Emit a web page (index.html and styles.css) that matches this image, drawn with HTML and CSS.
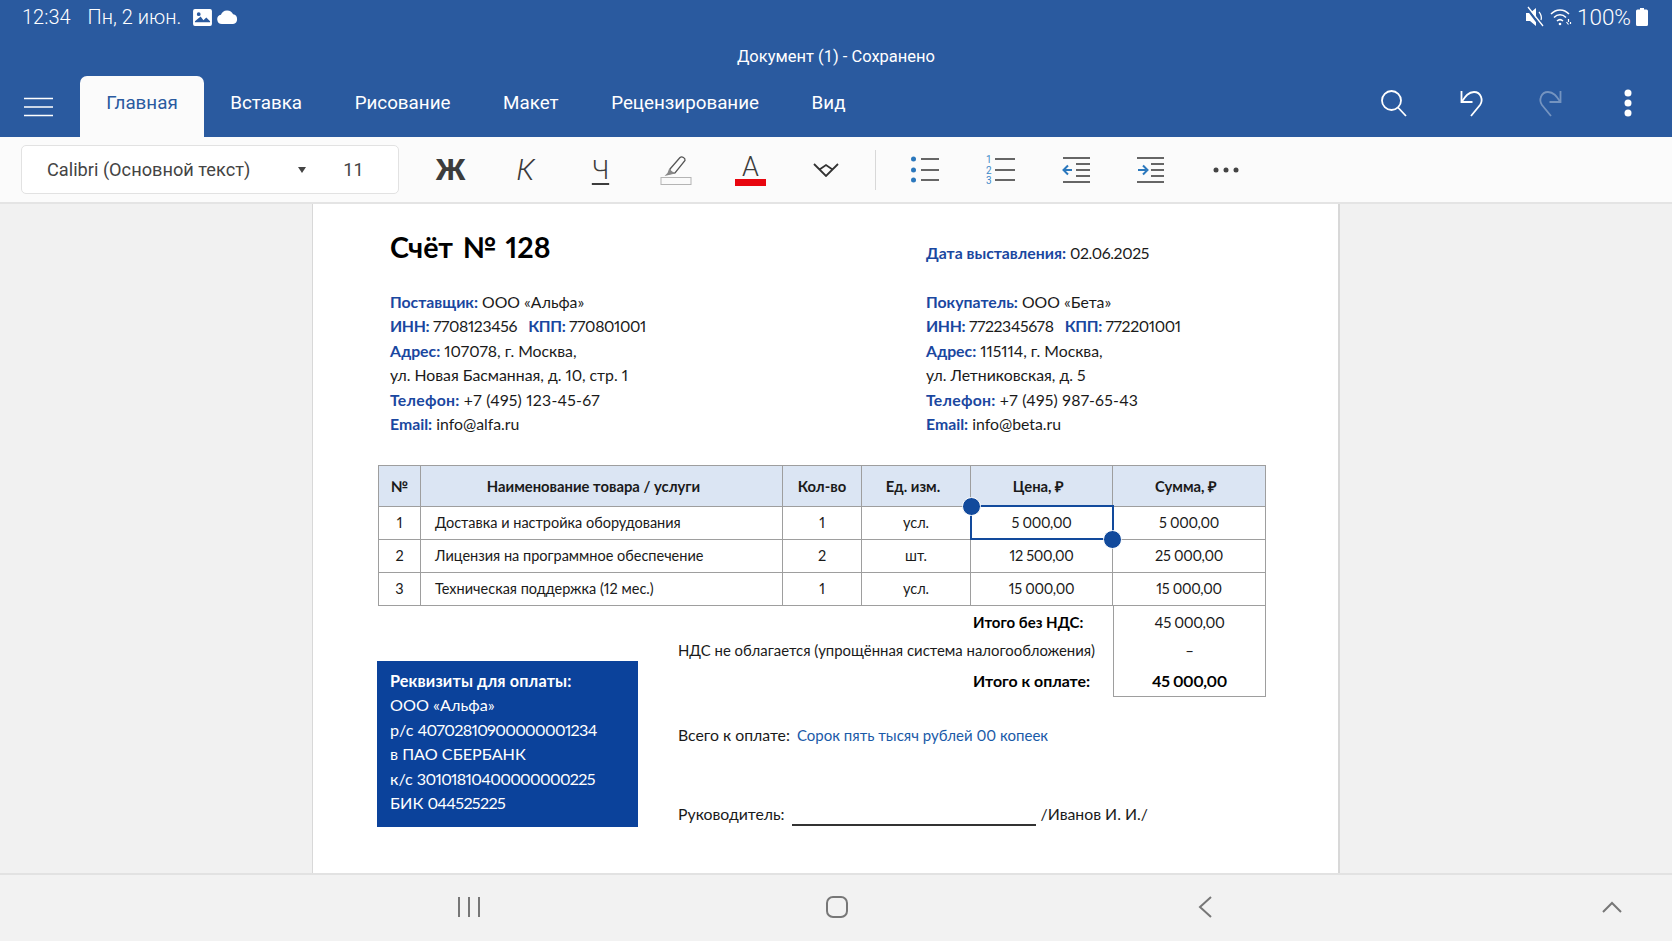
FILE: index.html
```html
<!DOCTYPE html>
<html lang="ru">
  <head>
    <meta charset="utf-8">
    <title>Документ (1) - Сохранено</title>
    <link rel="stylesheet" href="styles.css">
  </head>
  <body>
    <header class="app-header">
      <div class="status-bar">
        <span class="clock">12:34</span>
        <span class="date">Пн, 2 июн.</span>
        <svg class="status-image" width="19" height="17" viewBox="0 0 20 18">
          <path fill="#fff" fill-rule="evenodd" d="M2 0h16a2 2 0 0 1 2 2v14a2 2 0 0 1-2 2H2a2 2 0 0 1-2-2V2a2 2 0 0 1 2-2zM2 14h16v-1l-4-4-3 3-3-4-6 5zM6 3.500a2 2 0 1 0 0 4 2 2 0 0 0 0-4z"/>
        </svg>
        <svg class="status-cloud" width="21" height="14" viewBox="0 0 22 15">
          <path fill="#fff" d="M5 15a5 5 0 0 1-1-9.900A7 7 0 0 1 17 4.600a5.300 5.300 0 0 1 0 10.400z"/>
        </svg>
        <span class="status-right">
          <svg width="20" height="22" viewBox="0 0 20 22">
            <path fill="#fff" d="M1 7h4l6-5v18l-6-5H1z"/>
            <path stroke="#2a5a9f" stroke-width="2.500" d="M1.500 1.500l15 20"/>
            <path stroke="#fff" stroke-width="1.300" fill="none" d="M3 1l15 19M14 6c2 2 3 6 2 8"/>
          </svg>
          <svg width="22" height="20" viewBox="0 0 22 20" fill="none" stroke="#fff" stroke-width="1.500">
            <path d="M1 7c5-5.500 13-5.500 18 0M4 10.500c3.500-3.600 8.500-3.600 12 0M7 14c2-1.800 4-1.800 6 0"/>
            <circle cx="10" cy="17" r="1.300" fill="#fff" stroke="none"/>
            <path d="M18.500 12v3M16.500 15l2 2.500M20.500 17v-2" stroke-width="1.200"/>
          </svg>
          <span class="battery-text">100%</span>
          <svg width="12" height="18" viewBox="0 0 12 18">
            <path fill="#fff" d="M4 0h4v1.500h2.500a1.500 1.500 0 0 1 1.500 1.500v13.500a1.500 1.500 0 0 1-1.500 1.500h-9A1.500 1.500 0 0 1 0 16.500V3a1.500 1.500 0 0 1 1.500-1.500H4z"/>
          </svg>
        </span>
      </div>

      <div class="doc-title">Документ (1) - Сохранено</div>

      <div class="tab-bar">
        <svg class="menu-icon" width="29" height="20" viewBox="0 0 29 20" stroke="#fff" stroke-width="1.500">
          <path d="M0 1.500h29M0 10h29M0 18.500h29"/>
        </svg>
        <div class="tab active">Главная</div>
        <div class="tab">Вставка</div>
        <div class="tab">Рисование</div>
        <div class="tab">Макет</div>
        <div class="tab">Рецензирование</div>
        <div class="tab">Вид</div>
        <div class="header-actions">
          <svg class="action" width="28" height="28" viewBox="0 0 28 28" fill="none" stroke="#fff" stroke-width="1.800">
            <circle cx="11.500" cy="11.500" r="9.500"/>
            <path d="M18 18.500l8 8.500"/>
          </svg>
          <svg class="action" width="28" height="28" viewBox="0 0 28 28" fill="none" stroke="#fff" stroke-width="1.800">
            <path d="M3.500 2v11h11"/>
            <path d="M3.500 13C7 8 10 3 16 3c7 0 9.500 8 6 13l-9 11"/>
          </svg>
          <svg class="action redo" width="28" height="28" viewBox="0 0 28 28" fill="none" stroke="#fff" stroke-width="1.800">
            <path d="M24.500 2v11h-11"/>
            <path d="M24.500 13C21 8 18 3 12 3 5 3 2.500 11 6 16l9 11"/>
          </svg>
          <svg class="action" width="28" height="28" viewBox="0 0 28 28" fill="#fff">
            <circle cx="14" cy="4" r="3.500"/>
            <circle cx="14" cy="14" r="3.500"/>
            <circle cx="14" cy="24" r="3.500"/>
          </svg>
        </div>
      </div>
    </header>

    <div class="toolbar">
      <div class="font-picker">
        <span class="font-name">Calibri (Основной текст)</span>
        <span class="font-arrow"></span>
        <span class="font-size">11</span>
      </div>
      <div class="tool tool-bold">Ж</div>
      <div class="tool tool-italic">К</div>
      <div class="tool tool-underline">Ч</div>
      <div class="tool">
        <svg width="32" height="30" viewBox="0 0 32 30">
          <path fill="none" stroke="#555" stroke-width="1.300" d="M10 14L20 2.500c2-1.500 5.500 .5 5 3L15 18l-5 .5z"/>
          <path fill="#888" d="M9 14l6 4.500-4 1-6.500 1.500 3-3z"/>
          <rect x="1" y="22.500" width="30" height="7" fill="#fafafa" stroke="#b4b4b4"/>
        </svg>
      </div>
      <div class="tool tool-color">A</div>
      <div class="tool">
        <svg width="26" height="14" viewBox="0 0 26 14" fill="none" stroke="#333" stroke-width="1.800">
          <path d="M1 1l12 12L25 1M6.500 6.500L13 2l6.500 4.500"/>
        </svg>
      </div>
      <div class="tool-sep"></div>
      <div class="tool">
        <svg width="30" height="30" viewBox="0 0 30 30" stroke="#666" stroke-width="2">
          <circle cx="2.500" cy="4" r="2.500" fill="#2b78bd" stroke="none"/>
          <circle cx="2.500" cy="15" r="2.500" fill="#2b78bd" stroke="none"/>
          <circle cx="2.500" cy="25" r="2.500" fill="#2b78bd" stroke="none"/>
          <path d="M10 4h18M10 15h18M10 25h18"/>
        </svg>
      </div>
      <div class="tool">
        <svg width="30" height="30" viewBox="0 0 30 30" stroke="#666" stroke-width="2">
          <text x="0" y="8" class="list-num">1</text>
          <text x="0" y="19" class="list-num">2</text>
          <text x="0" y="29" class="list-num">3</text>
          <path d="M9 4h20M9 15h20M9 25h20"/>
        </svg>
      </div>
      <div class="tool">
        <svg width="30" height="30" viewBox="0 0 30 30" fill="none">
          <path stroke="#666" stroke-width="2" d="M2 3h27M15 9h14M15 15h14M15 21h14M2 27h27"/>
          <path stroke="#2b78bd" stroke-width="2" d="M11 15H3M7 10.500L2.500 15 7 19.500"/>
        </svg>
      </div>
      <div class="tool">
        <svg width="30" height="30" viewBox="0 0 30 30" fill="none">
          <path stroke="#666" stroke-width="2" d="M1 3h27M15 9h13M15 15h13M15 21h13M1 27h27"/>
          <path stroke="#2b78bd" stroke-width="2" d="M2 15h8M7 10.500l4.500 4.500L7 19.500"/>
        </svg>
      </div>
      <div class="tool">
        <svg width="26" height="6" viewBox="0 0 26 6" fill="#444">
          <circle cx="3" cy="3" r="2.500"/>
          <circle cx="13" cy="3" r="2.500"/>
          <circle cx="23" cy="3" r="2.500"/>
        </svg>
      </div>
    </div>

    <main class="workspace">
      <article class="sheet">
        <div class="parties">
          <h1 class="invoice-title">Счёт № 128</h1>
          <div class="invoice-date"><b>Дата выставления:</b> <span class="num">02.06.2025</span></div>
          <div class="party">
            <div><b>Поставщик:</b> ООО «Альфа»</div>
            <div class="tax-ids"><b>ИНН:</b> 7708123456 &nbsp;&nbsp;<b>КПП:</b> 770801001</div>
            <div><b>Адрес:</b> 107078, г. Москва,</div>
            <div>ул. Новая Басманная, д. 10, стр. 1</div>
            <div class="phone"><b>Телефон:</b> +7 (495) 123-45-67</div>
            <div><b>Email:</b> info@alfa.ru</div>
          </div>
          <div class="party">
            <div><b>Покупатель:</b> ООО «Бета»</div>
            <div class="tax-ids"><b>ИНН:</b> 7722345678 &nbsp;&nbsp;<b>КПП:</b> 772201001</div>
            <div><b>Адрес:</b> 115114, г. Москва,</div>
            <div>ул. Летниковская, д. 5</div>
            <div class="phone"><b>Телефон:</b> +7 (495) 987-65-43</div>
            <div><b>Email:</b> info@beta.ru</div>
          </div>
        </div>

        <table class="items">
          <colgroup>
            <col class="col-num">
            <col class="col-name">
            <col class="col-qty">
            <col class="col-unit">
            <col class="col-price">
            <col class="col-sum">
          </colgroup>
          <thead>
            <tr>
              <th>№</th>
              <th class="head-name">Наименование товара / услуги</th>
              <th>Кол-во</th>
              <th class="head-shift">Ед. изм.</th>
              <th class="head-shift">Цена, ₽</th>
              <th class="head-shift">Сумма, ₽</th>
            </tr>
          </thead>
          <tbody>
            <tr>
              <td>1</td>
              <td class="cell-name">Доставка и настройка оборудования</td>
              <td>1</td>
              <td>усл.</td>
              <td class="selected money">5 000,00<span class="handle handle-start"></span><span class="handle handle-end"></span></td>
              <td class="money">5 000,00</td>
            </tr>
            <tr>
              <td>2</td>
              <td class="cell-name">Лицензия на программное обеспечение</td>
              <td>2</td>
              <td>шт.</td>
              <td class="money">12 500,00</td>
              <td class="money">25 000,00</td>
            </tr>
            <tr>
              <td>3</td>
              <td class="cell-name">Техническая поддержка (12 мес.)</td>
              <td>1</td>
              <td>усл.</td>
              <td class="money">15 000,00</td>
              <td class="money">15 000,00</td>
            </tr>
          </tbody>
        </table>

        <div class="lower">
          <div class="payment">
            <div class="payment-title">Реквизиты для оплаты:</div>
            <div>ООО «Альфа»</div>
            <div>р/с <span class="account">40702810900000001234</span></div>
            <div>в ПАО СБЕРБАНК</div>
            <div>к/с <span class="account">30101810400000000225</span></div>
            <div>БИК <span class="account">044525225</span></div>
          </div>
          <div class="summary">
            <div class="total-row row-first">
              <div class="total-label strong">Итого без НДС:</div>
              <div class="total-sum num">45 000,00</div>
            </div>
            <div class="total-row row-tax">
              <div class="total-label note">НДС не облагается (упрощённая система налогообложения)</div>
              <div class="total-sum">–</div>
            </div>
            <div class="total-row row-last">
              <div class="total-label strong">Итого к оплате:</div>
              <div class="total-sum strong num">45 000,00</div>
            </div>
            <div class="in-words">Всего к оплате: <span class="words-value">Сорок пять тысяч рублей 00 копеек</span></div>
            <div class="signature">Руководитель: <span class="sign-line"></span> /Иванов И. И./</div>
          </div>
        </div>
      </article>
    </main>

    <nav class="nav-bar">
      <svg width="22" height="22" viewBox="0 0 22 22" stroke="#777" stroke-width="2">
        <path d="M1 1v20M11 1v20M21 1v20"/>
      </svg>
      <svg width="22" height="22" viewBox="0 0 22 22" fill="none" stroke="#777" stroke-width="2">
        <rect x="1" y="1" width="20" height="20" rx="6"/>
      </svg>
      <svg width="14" height="22" viewBox="0 0 14 22" fill="none" stroke="#777" stroke-width="2">
        <path d="M13 1L2 11l11 10"/>
      </svg>
      <svg class="nav-up" width="20" height="12" viewBox="0 0 20 12" fill="none" stroke="#777" stroke-width="2">
        <path d="M1 11l9-9 9 9"/>
      </svg>
    </nav>
  </body>
</html>
```

FILE: styles.css
```css
* {
  box-sizing: border-box;
}

html,
body {
  height: 100%;
}

body {
  margin: 0;
  display: flex;
  flex-direction: column;
  height: 941px;
  overflow: hidden;
  background: #f1f1f1;
  font-family: Roboto, sans-serif;
}

/* Header */
.app-header {
  flex: none;
  height: 137px;
  background: #2a5a9f;
  color: #fff;
}

.status-bar {
  display: flex;
  align-items: center;
  height: 34px;
  padding: 0 24px 0 22px;
  font-size: 20px;
  font-weight: 300;
}

.date {
  margin-left: 17px;
}

.status-image {
  margin-left: 12px;
}

.status-cloud {
  margin-left: 5px;
}

.status-right {
  display: flex;
  align-items: center;
  gap: 5px;
  margin-left: auto;
}

.battery-text {
  font-size: 22.500px;
}

.doc-title {
  height: 42px;
  padding-top: 13px;
  font-size: 16.500px;
  line-height: 20px;
  text-align: center;
}

.tab-bar {
  display: flex;
  align-items: center;
  height: 61px;
  padding-left: 24px;
}

.menu-icon {
  margin-right: 27px;
}

.tab {
  height: 61px;
  padding: 0 26.300px;
  font-size: 18.800px;
  line-height: 55px;
}

.tab.active {
  background: #fbfbfb;
  border-radius: 7px 7px 0 0;
  color: #2a5a9f;
}

.header-actions {
  display: flex;
  margin-left: auto;
  margin-right: 30px;
  gap: 50px;
}

.action {
  margin-top: -8px;
}

.redo {
  opacity: 0.35;
}

/* Toolbar */
.toolbar {
  flex: none;
  display: flex;
  align-items: center;
  height: 67px;
  padding: 0 0 0 21px;
  background: #fbfbfb;
  border-bottom: 2px solid #e4e4e4;
}

.font-picker {
  display: flex;
  align-items: center;
  width: 378px;
  height: 49px;
  margin-right: 14px;
  padding-left: 25px;
  background: #fff;
  border: 1px solid #e2e2e2;
  border-radius: 5px;
  color: #444;
  font-size: 18.200px;
}

.font-arrow {
  margin-left: 48px;
  border-top: 6px solid #444;
  border-left: 4.500px solid transparent;
  border-right: 4.500px solid transparent;
}

.font-size {
  margin-left: 37px;
}

.tool {
  display: flex;
  align-items: center;
  justify-content: center;
  width: 75px;
  height: 60px;
  color: #3c3c3c;
}

.tool-bold {
  font-size: 30px;
  font-weight: 700;
}

.tool-italic {
  font-size: 29px;
  font-style: italic;
  font-weight: 300;
}

.tool-underline {
  font-size: 26px;
  font-weight: 300;
  text-decoration: underline;
  text-underline-offset: 4px;
}

.tool-color {
  height: 33px;
  font-size: 27px;
  font-weight: 300;
  line-height: 29px;
  background: linear-gradient(#e8060f, #e8060f) center bottom / 31px 7px no-repeat;
  align-items: flex-start;
}

.tool-sep {
  width: 1px;
  height: 40px;
  margin: 0 12px;
  background: #d8d8d8;
}

.list-num {
  fill: #3f8ac9;
  stroke: none;
  font-size: 10px;
}

/* Document */
.workspace {
  flex: 1;
  min-height: 0;
  overflow: hidden;
  padding-left: 312px;
}

.sheet {
  width: 1028px;
  height: 100%;
  padding: 23px 72px 0 65px;
  background: #fff;
  border-left: 1px solid #d8d8d8;
  border-right: 2px solid #d8d8d8;
  color: #1a1a1a;
  font-family: Lato, "Open Sans", sans-serif;
  font-size: 15.800px;
  font-variant-numeric: proportional-nums;
  line-height: 24.500px;
}

.sheet b {
  color: #1a47a0;
  font-weight: 700;
}

.num {
  letter-spacing: -0.4px;
}

.parties {
  display: grid;
  grid-template-columns: 536px 1fr;
  row-gap: 22.600px;
  padding-left: 12px;
}

.invoice-title {
  margin: 0;
  color: #000;
  font-size: 28.600px;
  font-weight: 700;
  line-height: 40px;
  word-spacing: 2.500px;
}

.invoice-date {
  padding-top: 14px;
}

.tax-ids {
  letter-spacing: -0.35px;
}

.phone {
  letter-spacing: 0.25px;
}

.items {
  width: 887px;
  margin-top: 28.400px;
  border-collapse: collapse;
  table-layout: fixed;
  font-size: 14.500px;
  line-height: 20px;
}

.col-num {
  width: 42px;
}

.col-name {
  width: 362px;
}

.col-qty {
  width: 79px;
}

.col-unit {
  width: 109px;
}

.col-price {
  width: 142px;
}

.col-sum {
  width: 153px;
}

.items th,
.items td {
  padding: 0;
  border: 1px solid #9e9e9e;
  text-align: center;
}

.items th {
  height: 41px;
  background: #dbe5f3;
  font-size: 14.800px;
  font-weight: 700;
}

.items th.head-name {
  padding-right: 16px;
}

.items th.head-shift {
  padding-right: 6px;
}

.items td {
  height: 33px;
}

.items td.money {
  letter-spacing: -0.3px;
}

.items td.cell-name {
  padding-left: 14px;
  text-align: left;
}

.items td.selected {
  position: relative;
  outline: 2px solid #124a9c;
  outline-offset: -1px;
}

.handle {
  position: absolute;
  width: 19px;
  height: 19px;
  background: #124a9c;
  border: 1px solid #fff;
  border-radius: 50%;
}

.handle-start {
  top: -10px;
  left: -9px;
}

.handle-end {
  right: -10px;
  bottom: -10px;
}

.lower {
  display: grid;
  grid-template-columns: 300px 588px;
}

.payment {
  width: 261px;
  height: 166px;
  margin: 55px 0 0 -1px;
  padding: 8px 13px;
  background: #0b429b;
  color: #fff;
  font-size: 16.200px;
}

.payment-title {
  font-weight: 700;
  letter-spacing: 0.15px;
}

.account {
  letter-spacing: -0.7px;
}

.total-row {
  display: flex;
  font-size: 15px;
}

.total-label {
  width: 435px;
}

.total-sum {
  width: 153px;
  border-left: 1px solid #9e9e9e;
  border-right: 1px solid #9e9e9e;
  text-align: center;
}

.strong {
  color: #000;
  font-weight: 700;
}

.total-label.strong {
  padding-left: 295px;
}

.total-label.note {
  padding-right: 19px;
  font-size: 14.900px;
  text-align: right;
  white-space: nowrap;
}

.row-first {
  height: 35px;
  line-height: 33px;
}

.row-tax {
  height: 19px;
  line-height: 19px;
}

.row-last {
  height: 37px;
  font-size: 15.900px;
  line-height: 42px;
}

.row-last .total-sum {
  border-bottom: 1px solid #9e9e9e;
}

.in-words {
  margin-top: 26px;
}

.words-value {
  margin-left: 3px;
  color: #1a5aa8;
  font-size: 15px;
}

.signature {
  display: flex;
  align-items: center;
  gap: 5px;
  margin-top: 55px;
}

.sign-line {
  width: 244px;
  height: 2px;
  margin: 21px 0 0 2px;
  background: #333;
}

/* System navigation */
.nav-bar {
  flex: none;
  display: grid;
  grid-template-columns: repeat(3, 368px) 1fr;
  justify-items: center;
  align-items: center;
  height: 68px;
  padding: 0 50px 2px 285px;
  background: #f2f2f2;
  border-top: 2px solid #e2e2e2;
}

.nav-up {
  justify-self: end;
}
```
